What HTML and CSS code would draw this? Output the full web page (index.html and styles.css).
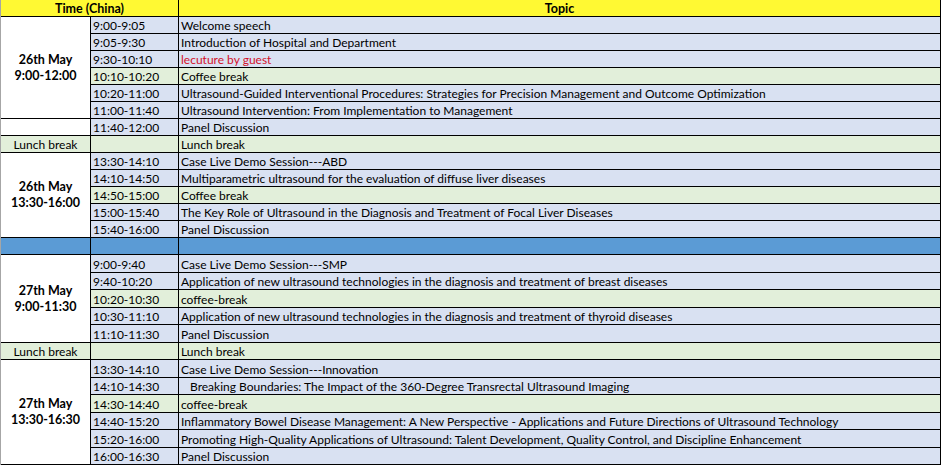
FILE: index.html
```html
<!DOCTYPE html>
<html lang="en">
<head>
<meta charset="utf-8">
<title>Schedule</title>
<link rel="stylesheet" href="styles.css">
</head>
<body>
<table class="schedule">
  <colgroup>
    <col class="c-day">
    <col class="c-time">
    <col class="c-topic">
  </colgroup>
  <thead>
    <tr class="r17">
      <th colspan="2" class="head">Time (China)</th>
      <th class="head">Topic</th>
    </tr>
  </thead>
  <tbody>
    <tr class="r17">
      <td rowspan="6" class="day">26th May<br>9:00-12:00</td>
      <td class="blue">9:00-9:05</td><td class="blue">Welcome speech</td>
    </tr>
    <tr class="r17"><td class="blue">9:05-9:30</td><td class="blue">Introduction of Hospital and Department</td></tr>
    <tr class="r17"><td class="blue">9:30-10:10</td><td class="blue red">lecuture by guest</td></tr>
    <tr class="r17"><td class="green">10:10-10:20</td><td class="green">Coffee break</td></tr>
    <tr class="r17"><td class="blue">10:20-11:00</td><td class="blue">Ultrasound-Guided Interventional Procedures: Strategies for Precision Management and Outcome Optimization</td></tr>
    <tr class="r17"><td class="blue">11:00-11:40</td><td class="blue">Ultrasound Intervention: From Implementation to Management</td></tr>
    <tr class="r17"><td class="day"></td><td class="blue">11:40-12:00</td><td class="blue">Panel Discussion</td></tr>
    <tr class="r17"><td class="green center">Lunch break</td><td class="green"></td><td class="green">Lunch break</td></tr>
    <tr class="r17">
      <td rowspan="5" class="day">26th May<br>13:30-16:00</td>
      <td class="blue">13:30-14:10</td><td class="blue">Case Live Demo Session---ABD</td>
    </tr>
    <tr class="r17"><td class="blue">14:10-14:50</td><td class="blue">Multiparametric ultrasound for the evaluation of diffuse liver diseases</td></tr>
    <tr class="r17"><td class="green">14:50-15:00</td><td class="green">Coffee break</td></tr>
    <tr class="r17"><td class="blue">15:00-15:40</td><td class="blue">The Key Role of Ultrasound in the Diagnosis and Treatment of Focal Liver Diseases</td></tr>
    <tr class="r17"><td class="blue">15:40-16:00</td><td class="blue">Panel Discussion</td></tr>
    <tr class="r17 sep"><td></td><td></td><td></td></tr>
    <tr class="r18">
      <td rowspan="5" class="day">27th May<br>9:00-11:30</td>
      <td class="blue">9:00-9:40</td><td class="blue">Case Live Demo Session---SMP</td>
    </tr>
    <tr class="r17"><td class="blue">9:40-10:20</td><td class="blue">Application of new ultrasound technologies in the diagnosis and treatment of breast diseases</td></tr>
    <tr class="r18"><td class="green">10:20-10:30</td><td class="green">coffee-break</td></tr>
    <tr class="r17"><td class="blue">10:30-11:10</td><td class="blue">Application of new ultrasound technologies in the diagnosis and treatment of thyroid diseases</td></tr>
    <tr class="r18"><td class="blue">11:10-11:30</td><td class="blue">Panel Discussion</td></tr>
    <tr class="r17"><td class="green center">Lunch break</td><td class="green"></td><td class="green">Lunch break</td></tr>
    <tr class="r18">
      <td rowspan="6" class="day">27th May<br>13:30-16:30</td>
      <td class="blue">13:30-14:10</td><td class="blue">Case Live Demo Session---Innovation</td>
    </tr>
    <tr class="r17"><td class="blue">14:10-14:30</td><td class="blue indent">Breaking Boundaries: The Impact of the 360-Degree Transrectal Ultrasound Imaging</td></tr>
    <tr class="r18"><td class="green">14:30-14:40</td><td class="green">coffee-break</td></tr>
    <tr class="r17"><td class="blue">14:40-15:20</td><td class="blue">Inflammatory Bowel Disease Management: A New Perspective - Applications and Future Directions of Ultrasound Technology</td></tr>
    <tr class="r18"><td class="blue">15:20-16:00</td><td class="blue">Promoting High-Quality Applications of Ultrasound: Talent Development, Quality Control, and Discipline Enhancement</td></tr>
    <tr class="r17"><td class="blue">16:00-16:30</td><td class="blue">Panel Discussion</td></tr>
  </tbody>
</table>
</body>
</html>
```

FILE: styles.css
```css
html, body {
  margin: 0;
  padding: 0;
  background: #ffffff;
}

.schedule {
  table-layout: fixed;
  border-collapse: separate;
  border-spacing: 0;
  width: 941px;
  border-left: 1px solid #a6a6a6;
  font-family: Lato, "Liberation Sans", sans-serif;
  font-size: 12px;
  color: #000000;
}

.c-day { width: 90px; }
.c-time { width: 88px; }
.c-topic { width: 762px; }

.schedule th,
.schedule td {
  box-sizing: border-box;
  padding: 1px 0 0 2px;
  border-right: 1px solid #000000;
  border-bottom: 1px solid #000000;
  line-height: 15px;
  white-space: nowrap;
  overflow: hidden;
  text-align: left;
  vertical-align: middle;
}

.r17 { height: 17px; }
.r18 { height: 18px; }

.schedule th.head {
  background: #fff933;
  font-weight: 700;
  text-align: center;
  padding: 1px 0 0 0;
  font-size: 12.5px;
}

.schedule td.day {
  background: #ffffff;
  font-weight: 700;
  text-align: center;
  padding: 0;
  line-height: 16px;
  font-size: 12.5px;
}

.schedule td.center {
  text-align: center;
  padding: 1px 0 0 0;
}

.blue { background: #d9e1f2; }
.green { background: #e2efda; }
.sep td { background: #5b9bd5; }

.red { color: #d4112b; }
.schedule td.indent { padding-left: 11px; }
```
